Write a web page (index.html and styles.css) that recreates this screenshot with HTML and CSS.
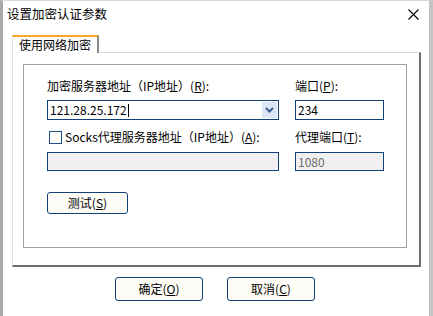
FILE: index.html
```html
<!DOCTYPE html>
<html>
	<head>
		<meta charset=utf-8>
		<title>设置加密认证参数</title>
		<link rel="stylesheet" href="styles.css">
	</head>
	<body>
		<div class="window">
			<div class="titlebar">
				<span class="title">设置加密认证参数</span>
				<svg class="close" width="11" height="11" viewBox="0 0 11 11">
					<path d="M0.5 0.5 L10.5 10.5 M10.5 0.5 L0.5 10.5" stroke="#000" stroke-width="1.1" fill="none"/>
				</svg>
			</div>
			<div class="tabs">
				<div class="tab">使用网络加密</div>
			</div>
			<div class="panel">
				<div class="group">
					<div class="grid">
						<div class="label">加密服务器地址（IP地址）(<u>R</u>):</div>
						<div class="label">端口(<u>P</u>):</div>

						<div class="field combo">
							<span class="value">121.28.25.172<span class="caret"></span></span>
							<span class="drop">
								<svg width="9" height="6" viewBox="0 0 9 6">
									<path d="M1 1 L4.5 4.5 L8 1" stroke="#3b5e8c" stroke-width="2" fill="none"/>
								</svg>
							</span>
						</div>
						<div class="field"><span class="value">234</span></div>

						<div class="label check-row">
							<span class="checkbox"></span>
							<span>Socks代理服务器地址（IP地址）(<u>A</u>):</span>
						</div>
						<div class="label check-row">代理端口(<u>T</u>):</div>

						<div class="field disabled"></div>
						<div class="field disabled"><span class="value">1080</span></div>
					</div>
					<button class="btn test">测试(<u>S</u>)</button>
				</div>
			</div>
			<div class="actions">
				<button class="btn">确定(<u>O</u>)</button>
				<button class="btn">取消(<u>C</u>)</button>
			</div>
		</div>
	</body>
</html>
```

FILE: styles.css
```css
body { margin: 0; padding: 0; background: #fff; }
.window {
	width: 433px; height: 316px;
	box-sizing: border-box;
	border-top: 1px solid #d8d8d8;
	border-left: 3px solid #a9a9a9;
	border-right: 4px solid #c4c4c4;
	background: #fff;
	font-family: "Noto Sans CJK SC", "Microsoft YaHei", sans-serif;
	font-size: 12px;
	color: #000;
	overflow: hidden;
}

.titlebar {
	height: 28px;
	display: flex;
	align-items: flex-start;
	justify-content: space-between;
	padding: 5px 7px 0 4px;
	box-sizing: border-box;
	line-height: 16px;
	font-size: 12.5px;
}
.close { margin-top: 3px; margin-right: 3px; }

.tabs {
	display: flex;
	margin: 6px 0 0 9px;
	position: relative;
	z-index: 1;
}
.tab {
	height: 18px;
	box-sizing: border-box;
	padding: 0 6px 0 6px;
	line-height: 16px;
	border-top: 2px solid #f5a623;
	border-left: 1px solid #e3e3e3;
	border-right: 2px solid #8a8a8a;
	background: #fff;
	margin-bottom: -1px;
}

.panel {
	margin-left: 9px;
	width: 409px;
	height: 215px;
	box-sizing: border-box;
	border-top: 1px solid #dadada;
	border-left: 1px solid #e3e3e3;
	border-right: 2px solid #6f6f6f;
	border-bottom: 2px solid #6f6f6f;
	padding: 11px 12px 0 10px;
}
.group {
	height: 184px;
	box-sizing: border-box;
	border: 1px solid #a0a0a0;
	padding: 13px 0 0 23px;
}
.grid {
	display: grid;
	grid-template-columns: 232px 89px;
	column-gap: 16px;
}
.label {
	line-height: 16px;
	height: 16px;
	white-space: nowrap;
}
.check-row {
	display: flex;
	align-items: center;
	margin-top: 9px;
}
.checkbox {
	width: 13px; height: 13px;
	box-sizing: border-box;
	border: 1px solid #1c4f86;
	background: #fdfcf8;
	margin: 0 3px 0 2px;
}

.field {
	height: 20px;
	box-sizing: border-box;
	border: 1px solid #124078;
	background: #fff;
	display: flex;
	align-items: center;
	margin-top: 6px;
	padding-left: 2px;
}
.field .value { flex: 1; line-height: 16px; display: flex; align-items: center; }
.caret { display: inline-block; width: 1px; height: 13px; background: #000; margin-left: 1px; }
.combo { padding-right: 1px; }
.drop {
	width: 15px; height: 16px;
	background: #dae6f6;
	display: flex;
	align-items: center;
	justify-content: center;
}
.disabled {
	background: #f0f0f0;
	height: 19px;
	margin-top: 7px;
	color: #6d6d6d;
}

.btn {
	font: inherit;
	color: #000;
	background: #fefcf7;
	border: 1px solid #123f73;
	border-radius: 3px;
	padding: 0;
	line-height: 16px;
}
.test {
	width: 81px; height: 22px;
	margin-top: 21px;
}
.actions {
	display: flex;
	gap: 24px;
	margin: 10px 0 0 112px;
}
.actions .btn { width: 88px; height: 24px; }
```
